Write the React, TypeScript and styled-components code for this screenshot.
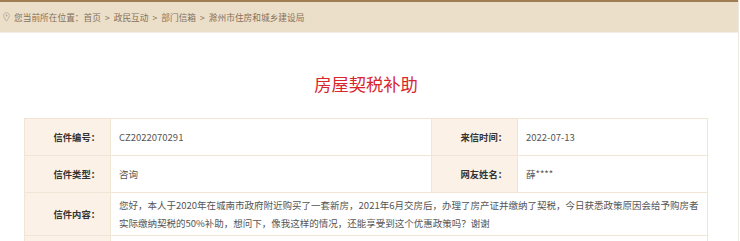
import styled, { createGlobalStyle } from "styled-components";

const GlobalStyle = createGlobalStyle`
  html, body {
    margin: 0;
    padding: 0;
    background: #fff;
  }
  body {
    font-family: "Noto Sans CJK SC", "Noto Sans", sans-serif;
  }
`;

interface IRow {
  label: string;
  value: string;
  label2?: string;
  value2?: string;
}

const rows: IRow[] = [
  { label: "信件编号：", value: "CZ2022070291", label2: "来信时间：", value2: "2022-07-13" },
  { label: "信件类型：", value: "咨询", label2: "网友姓名：", value2: "薛****" },
  {
    label: "信件内容：",
    value:
      "您好，本人于2020年在城南市政府附近购买了一套新房，2021年6月交房后，办理了房产证并缴纳了契税，今日获悉政策原因会给予购房者实际缴纳契税的50%补助，想问下，像我这样的情况，还能享受到这个优惠政策吗？谢谢",
  },
  { label: "", value: "" },
];

export default function App() {
  return (
    <>
      <GlobalStyle />
      <Page>
        <TopLine />
        <Crumbs>
          <PinIcon viewBox="0 0 8 11" width="7" height="10">
            <path
              d="M4 0.6C2.1 0.6 0.7 2 0.7 3.8c0 2.3 3.3 6.4 3.3 6.4s3.3-4.1 3.3-6.4C7.3 2 5.9 0.6 4 0.6z"
              fill="none"
              stroke="#b9ab99"
              strokeWidth="1"
            />
            <circle cx="4" cy="3.8" r="1.1" fill="#b9ab99" />
          </PinIcon>
          <span>您当前所在位置：</span>
          <span>首页</span>
          <Sep>&gt;</Sep>
          <span>政民互动</span>
          <Sep>&gt;</Sep>
          <span>部门信箱</span>
          <Sep>&gt;</Sep>
          <span>滁州市住房和城乡建设局</span>
        </Crumbs>
        <Content>
          <Title>房屋契税补助</Title>
          <Table>
            <tbody>
              {rows.map((r, i) =>
                r.label2 !== undefined ? (
                  <tr key={i}>
                    <Label>{r.label}</Label>
                    <Value $w={321}>{r.value}</Value>
                    <Label $w={86}>{r.label2}</Label>
                    <Value>{r.value2}</Value>
                  </tr>
                ) : (
                  <tr key={i}>
                    <Label $tall={r.value !== ""}>{r.label}</Label>
                    <Value colSpan={3} $multi>
                      {r.value}
                    </Value>
                  </tr>
                )
              )}
            </tbody>
          </Table>
        </Content>
      </Page>
    </>
  );
}

const Page = styled.div`
  width: 738px;
  height: 241px;
  overflow: hidden;
  border-right: 1px solid #ece8e2;
`;

const TopLine = styled.div`
  height: 2px;
  background: #a07e55;
`;

const Crumbs = styled.div`
  height: 30px;
  display: flex;
  align-items: center;
  padding-left: 3px;
  background: #ebdfc9;
  border-bottom: 1px solid #f4eee5;
  font-size: 8.7px;
  color: #86705a;
  white-space: nowrap;
`;

const PinIcon = styled.svg`
  margin-right: 4px;
  flex-shrink: 0;
`;

const Sep = styled.span`
  margin: 0 4px;
`;

const Content = styled.div`
  padding: 0 30px 0 24px;
`;

const Title = styled.h1`
  margin: 0;
  padding: 34px 0 17px;
  text-align: center;
  font-size: 17.3px;
  font-weight: 400;
  line-height: 34px;
  color: #d8262d;
`;

const Table = styled.table`
  width: 684px;
  border-collapse: collapse;
  table-layout: fixed;
`;

const Label = styled.td<{ $w?: number; $tall?: boolean }>`
  width: ${(p) => (p.$w ? `${p.$w}px` : "86px")};
  height: ${(p) => (p.$tall ? "43px" : "37px")};
  padding: 0 10px 0 0;
  box-sizing: border-box;
  background: #fbf1e6;
  border: 1px solid #f3e5d6;
  text-align: right;
  font-size: 9.3px;
  font-weight: 700;
  color: #333;
  white-space: nowrap;
`;

const Value = styled.td<{ $w?: number; $multi?: boolean }>`
  ${(p) => (p.$w ? `width: ${p.$w}px;` : "")}
  padding: ${(p) => (p.$multi ? "2px 8px 3px" : "0 8px")};
  box-sizing: border-box;
  border: 1px solid #f3e5d6;
  font-size: 9.5px;
  line-height: 18px;
  color: #555;
`;
